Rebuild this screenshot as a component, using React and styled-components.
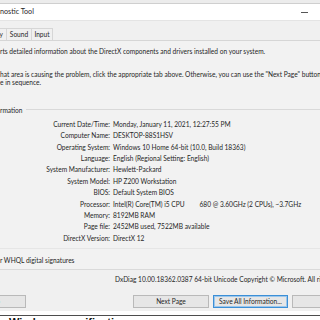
import React from 'react';
import styled, { createGlobalStyle } from 'styled-components';

const Global = createGlobalStyle`
  html, body { margin: 0; padding: 0; background: #ffffff; }
  body { width: 320px; height: 320px; overflow: hidden; font-family: Lato, "Noto Sans", sans-serif; }
`;

const Screen = styled.div`
  width: 320px;
  height: 320px;
  overflow: hidden;
  display: flex;
  flex-direction: column;
  background: #ffffff;
  color: #262626;
  font-size: 6.6px;
`;

const TopStrip = styled.div`
  height: 3px;
  flex: none;
  background: #ececec;
  border-bottom: 1px solid #cfcfcf;
`;

const TitleBar = styled.div`
  height: 16px;
  flex: none;
  background: #ffffff;
  border-bottom: 1px solid #e4e4e4;
  display: flex;
  align-items: center;
  justify-content: space-between;
  font-size: 7.2px;
  white-space: nowrap;
`;

const Title = styled.span`
  line-height: 1;
`;

const Minimize = styled.span`
  width: 7px;
  height: 1px;
  background: #555;
  margin-right: 12px;
`;

const Window = styled.div`
  flex: none;
  height: 290px;
  background: #f0f0f0;
  display: flex;
  flex-direction: column;
  white-space: nowrap;
`;

const TabStrip = styled.div`
  height: 12px;
  margin-top: 7px;
  display: flex;
  align-items: stretch;
`;

const Tab = styled.div`
  width: ${p => p.$w}px;
  margin-left: -1px;
  border: 1px solid #d6d6d6;
  border-bottom: none;
  background: #f0f0f0;
  display: flex;
  align-items: center;
  justify-content: ${p => (p.$end ? 'flex-end' : 'center')};
  padding-right: ${p => (p.$end ? 3 : 0)}px;
  box-sizing: border-box;
  line-height: 1;
`;

const Panel = styled.div`
  border-top: 1px solid #d6d6d6;
  border-bottom: 1px solid #dadada;
  background: #f2f2f2;
  padding: 6px 0 4.5px 0;
  display: flex;
  flex-direction: column;
`;

const Line = styled.div`
  line-height: 8.5px;
  height: 8.5px;
  margin-top: ${p => p.$mt || 0}px;
  padding-left: ${p => p.$pl || 0}px;
`;

const Group = styled.div`
  margin-top: 19px;
  border-bottom: 1px solid #e6e6e6;
  padding-bottom: 4px;
`;

const GroupHead = styled.div`
  display: flex;
  align-items: center;
  height: 8.5px;
  line-height: 8.5px;
  gap: 3px;
`;

const GroupRule = styled.div`
  flex: 1;
  height: 1px;
  background: #d9d9d9;
`;

const Rows = styled.div`
  margin-top: 4.5px;
  display: grid;
  grid-template-columns: 110px 1fr;
  column-gap: 3px;
  grid-auto-rows: 11.4px;
  align-items: center;
`;

const Label = styled.div`
  text-align: right;
  line-height: 1;
`;

const Value = styled.div`
  line-height: 1;
`;

const Gap = styled.span`
  display: inline-block;
  width: ${p => p.$w}px;
`;

const ButtonRow = styled.div`
  margin-top: 11.5px;
  height: 13px;
  display: flex;
  gap: 4px;
`;

const Button = styled.div`
  flex: none;
  width: ${p => p.$w}px;
  margin-left: ${p => p.$ml || 0}px;
  box-sizing: border-box;
  border: 1px solid ${p => (p.$default ? '#3c8fd6' : '#b9b9b9')};
  box-shadow: ${p => (p.$default ? 'inset 0 0 0 1px #9cc7ec' : 'none')};
  background: #e6e6e6;
  display: flex;
  align-items: center;
  justify-content: center;
  line-height: 1;
`;

const Shadow = styled.div`
  flex: none;
  margin-top: 4px;
  height: 1px;
  background: #4d4d4d;
`;

const Below = styled.div`
  flex: 1;
  background: #ffffff;
  padding: 1px 0 0 9px;
  font-family: "Liberation Sans", Arial, sans-serif;
  font-weight: 700;
  font-size: 11px;
  line-height: 11px;
  color: #111;
  white-space: nowrap;
`;

const rows = [
  ['Current Date/Time:', 'Monday, January 11, 2021, 12:27:55 PM'],
  ['Computer Name:', 'DESKTOP-88S1HSV'],
  ['Operating System:', 'Windows 10 Home 64-bit (10.0, Build 18363)'],
  ['Language:', 'English (Regional Setting: English)'],
  ['System Manufacturer:', 'Hewlett-Packard'],
  ['System Model:', 'HP Z200 Workstation'],
  ['BIOS:', 'Default System BIOS'],
  ['Processor:', <>Intel(R) Core(TM) i5 CPU<Gap $w={15} />680 @ 3.60GHz (2 CPUs), ~3.7GHz</>],
  ['Memory:', '8192MB RAM'],
  ['Page file:', '2452MB used, 7522MB available'],
  ['DirectX Version:', 'DirectX 12'],
];

export default function App() {
  return (
    <Screen>
      <Global />
      <TopStrip />
      <TitleBar>
        <Title>nostic Tool</Title>
        <Minimize />
      </TitleBar>
      <Window>
        <TabStrip>
          <Tab $w={8} $end>y</Tab>
          <Tab $w={26}>Sound</Tab>
          <Tab $w={22}>Input</Tab>
        </TabStrip>
        <Panel>
          <Line>rts detailed information about the DirectX components and drivers installed on your system.</Line>
          <Line $mt={14}>hat area is causing the problem, click the appropriate tab above.  Otherwise, you can use the "Next Page" button below to visit each page</Line>
          <Line>e in sequence.</Line>
          <Group>
            <GroupHead>
              <span>rmation</span>
              <GroupRule />
            </GroupHead>
            <Rows>
              {rows.map(([l, v]) => (
                <React.Fragment key={l}>
                  <Label>{l}</Label>
                  <Value>{v}</Value>
                </React.Fragment>
              ))}
            </Rows>
          </Group>
          <Line $mt={7}>r WHQL digital signatures</Line>
        </Panel>
        <Line $mt={5} $pl={115}>DxDiag 10.00.18362.0387 64-bit Unicode  Copyright © Microsoft. All rights reserved.</Line>
        <ButtonRow>
          <Button $w={66} $ml={-40}>Help</Button>
          <Button $w={76} $ml={103}>Next Page</Button>
          <Button $w={75} $default>Save All Information...</Button>
          <Button $w={75}>Exit</Button>
        </ButtonRow>
      </Window>
      <Shadow />
      <Below>Windows specifications</Below>
    </Screen>
  );
}
